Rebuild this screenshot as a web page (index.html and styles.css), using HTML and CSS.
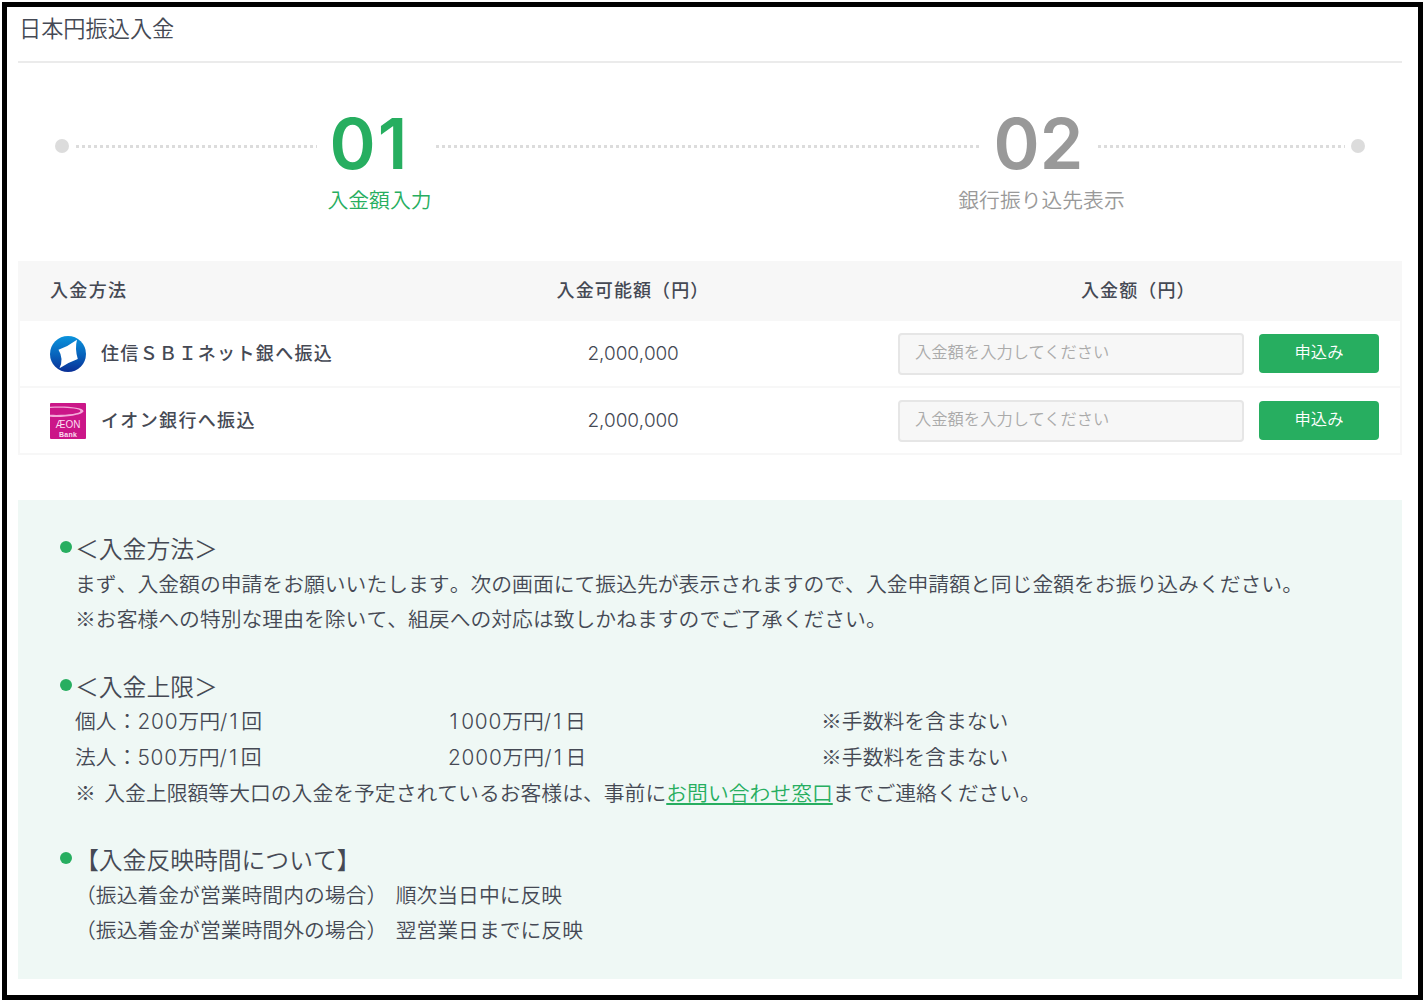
FILE: index.html
```html
<!DOCTYPE html>
<html lang="ja">
<head>
    <meta charset="UTF-8">
    <meta name="viewport" content="width=device-width, initial-scale=1.0">
    <title>日本円振込入金</title>
    <link rel="stylesheet" href="styles.css">
</head>
<body>
    <main class="frame">
        <h1 class="title">日本円振込入金</h1>

        <div class="steps">
            <span class="dot"></span>
            <span class="line line-start"></span>
            <div class="step active">
                <div class="step-num">01</div>
                <div class="step-label">入金額入力</div>
            </div>
            <span class="line line-mid"></span>
            <div class="step">
                <div class="step-num">02</div>
                <div class="step-label">銀行振り込先表示</div>
            </div>
            <span class="line line-end"></span>
            <span class="dot"></span>
        </div>

        <div class="methods">
            <div class="row head">
                <div class="name">入金方法</div>
                <div class="limit">入金可能額（円）</div>
                <div class="amount">入金额（円）</div>
            </div>
            <div class="row">
                <div class="name">
                    <svg class="logo" viewBox="0 0 36 36">
                        <defs>
                            <linearGradient id="sbi" x1="0" y1="0" x2="0" y2="1">
                                <stop offset="0" stop-color="#0a93dc"/>
                                <stop offset="0.5" stop-color="#0765bd"/>
                                <stop offset="1" stop-color="#0a2f96"/>
                            </linearGradient>
                        </defs>
                        <circle cx="18" cy="18" r="18" fill="url(#sbi)"/>
                        <path d="M27 3.8 Q24.6 13 27.8 23 Q18 26.5 9.5 32.3 Q14 23 8.5 13.8 Q18 10.5 27 3.8Z" fill="#fff"/>
                    </svg>
                    <span>住信ＳＢＩネット銀へ振込</span>
                </div>
                <div class="limit">2,000,000</div>
                <div class="amount">
                    <input type="text" placeholder="入金額を入力してください">
                    <button>申込み</button>
                </div>
            </div>
            <div class="row">
                <div class="name">
                    <svg class="logo" viewBox="0 0 36 36">
                        <rect width="36" height="36" rx="1" fill="#cb1688"/>
                        <path d="M0 3.8 C14 2.6 33 4 33.5 8 C33.5 12 14 14.8 0 13.8 V11.8 C14 12.4 30 11 30.5 8 C30 5.2 14 4.2 0 5Z" fill="#f3a8d8"/>
                        <text x="18" y="24.8" class="logo-aeon" textLength="25">ÆON</text>
                        <text x="18" y="33.8" class="logo-bank" textLength="18">Bank</text>
                    </svg>
                    <span>イオン銀行へ振込</span>
                </div>
                <div class="limit">2,000,000</div>
                <div class="amount">
                    <input type="text" placeholder="入金額を入力してください">
                    <button>申込み</button>
                </div>
            </div>
        </div>

        <div class="info">
            <section>
                <h2>＜入金方法＞</h2>
                <p>まず、入金額の申請をお願いいたします。次の画面にて振込先が表示されますので、入金申請額と同じ金額をお振り込みください。</p>
                <p>※お客様への特別な理由を除いて、組戻への対応は致しかねますのでご了承ください。</p>
            </section>
            <section>
                <h2>＜入金上限＞</h2>
                <div class="caps">
                    <span>個人：<b>200</b>万円<b>/</b><b class="one">1</b>回</span>
                    <span><b class="one">1</b><b>000</b>万円<b>/</b><b class="one">1</b>日</span>
                    <span>※手数料を含まない</span>
                    <span>法人：<b>500</b>万円<b>/</b><b class="one">1</b>回</span>
                    <span><b>2000</b>万円<b>/</b><b class="one">1</b>日</span>
                    <span>※手数料を含まない</span>
                </div>
                <p>※<b> </b>入金上限額等大口の入金を予定されているお客様は、事前に<a href="#">お問い合わせ窓口</a>までご連絡ください。</p>
            </section>
            <section>
                <h2>【入金反映時間について】</h2>
                <p>（振込着金が営業時間内の場合）<b> </b>順次当日中に反映</p>
                <p>（振込着金が営業時間外の場合）<b> </b>翌営業日までに反映</p>
            </section>
        </div>
    </main>
</body>
</html>
```
FILE: styles.css
```css
* {
    margin: 0;
    padding: 0;
    box-sizing: border-box;
}

body {
    height: 1003px;
    padding: 2px 2px 3px;
    background: #fff;
    color: #454954;
    font-family: 'Noto Sans CJK JP', sans-serif;
    font-weight: 350;
    font-kerning: none;
    overflow: hidden;
}

.frame {
    height: 998px;
    padding: 0 16px 0 11px;
    border: 5px solid #000;
}

.title {
    height: 56px;
    padding-left: 1px;
    border-bottom: 2px solid #ebebeb;
    font-size: 22.2px;
    font-weight: 350;
    line-height: 41px;
}

/* steps */
.steps {
    display: flex;
    height: 198px;
    padding: 44px 37px 0;
}

.dot {
    flex: none;
    width: 14px;
    height: 14px;
    margin-top: 32px;
    border-radius: 50%;
    background: #dcdcdc;
}

.line {
    height: 3px;
    margin-top: 38px;
    background: repeating-linear-gradient(90deg, #dcdcdc 0 3px, transparent 3px 6px);
}

.line-start {
    width: 241px;
    margin-left: 7px;
}

.line-mid {
    width: 543px;
}

.line-end {
    flex: 1;
    margin-right: 6px;
}

.step {
    display: flex;
    flex-direction: column;
    align-items: center;
    width: 119px;
    color: #999;
    white-space: nowrap;
}

.step.active {
    color: #27ae60;
}

.step-num {
    height: 76px;
    font-family: Inter, sans-serif;
    font-size: 70px;
    font-weight: 600;
    line-height: 74px;
}

.active .step-num {
    margin-left: -14px;
    letter-spacing: 2px;
}

.step-label {
    margin-left: 6px;
    font-size: 20.8px;
    line-height: 32px;
}

/* deposit methods */
.methods {
    border: 2px solid #f7f7f7;
    border-top: none;
}

.row {
    display: grid;
    grid-template-columns: 458px 310px 1fr;
    align-items: center;
    height: 67px;
    border-top: 2px solid #f7f7f7;
}

.row.head {
    height: 60px;
    padding-bottom: 4px;
    border: none;
    background: #f7f7f7;
}

.row.head + .row {
    height: 65px;
    border: none;
}

.name {
    display: flex;
    align-items: center;
    gap: 15px;
    padding-left: 30px;
    font-size: 18px;
    font-weight: 500;
    letter-spacing: 1.35px;
}

.name span {
    padding-bottom: 4px;
}

.logo {
    width: 36px;
    height: 36px;
}

.logo-aeon,
.logo-bank {
    fill: #fbdcf0;
    font-family: 'Liberation Sans', sans-serif;
    font-size: 10px;
    font-weight: 400;
    letter-spacing: 0;
    text-anchor: middle;
}

.logo-bank {
    font-size: 7px;
    font-weight: 700;
}

.limit {
    text-align: center;
    font-family: Inter, sans-serif;
    font-size: 19px;
    font-weight: 300;
    letter-spacing: -0.2px;
}

.amount {
    display: flex;
    gap: 15px;
    padding-left: 110px;
}

.head .limit,
.head .amount {
    font-family: 'Noto Sans CJK JP', sans-serif;
    font-size: 18px;
    font-weight: 500;
    letter-spacing: 1.1px;
}

.head .amount {
    padding-left: 293px;
}

input {
    width: 346px;
    height: 42px;
    padding: 0 15px 5px;
    border: 2px solid #e6e6e6;
    border-radius: 4px;
    background: #f7f7f7;
    font: 350 16.3px 'Noto Sans CJK JP', sans-serif;
}

input::placeholder {
    color: #aaa;
}

button {
    width: 120px;
    height: 39px;
    margin-top: 1px;
    padding-bottom: 4px;
    border: none;
    border-radius: 4px;
    background: #27ae60;
    color: #fff;
    font: 350 16.3px 'Noto Sans CJK JP', sans-serif;
}

/* notes */
.info {
    height: 479px;
    margin-top: 45px;
    padding: 30px 40px 0 57px;
    background: #eff8f5;
    font-size: 20.82px;
    line-height: 35.6px;
    white-space: nowrap;
}

.info section {
    margin-bottom: 31px;
}

.info h2 {
    position: relative;
    font-size: 23.8px;
    font-weight: 350;
}

.info h2::before {
    content: '';
    position: absolute;
    left: -15px;
    top: 11px;
    width: 12px;
    height: 12px;
    border-radius: 50%;
    background: #27ae60;
}

.info b {
    font-family: Inter, sans-serif;
    font-weight: 300;
    line-height: 1;
    letter-spacing: 0.8px;
    word-spacing: 1.8px;
}

.info .one {
    padding-left: 1.5px;
    letter-spacing: 3.5px;
}

.info a {
    color: #27ae60;
    text-decoration: underline;
}

.caps {
    display: grid;
    grid-template-columns: 373px 373px 1fr;
}
```
